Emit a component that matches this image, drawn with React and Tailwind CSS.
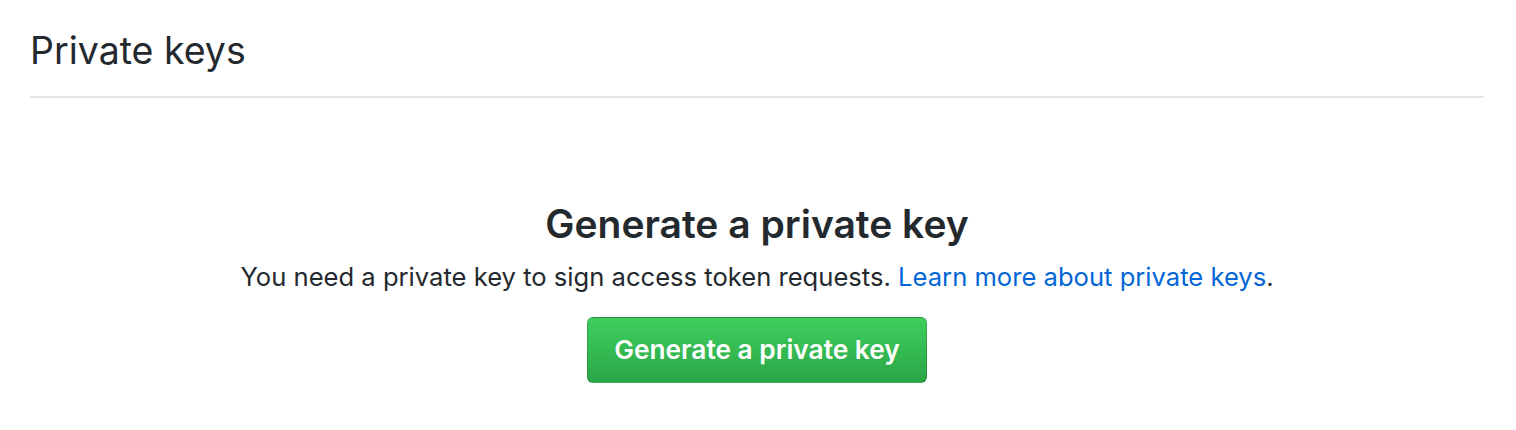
export default function App() {
  return (
    <div
      className="w-[1516px] h-[430px] bg-white text-[#24292e] pl-[30px] pr-[32px] pt-[24px]"
      style={{ fontFamily: 'Inter, "Noto Sans", sans-serif' }}
    >
      {/* Subhead */}
      <div className="border-b-2 border-[#e1e4e8] pb-[18px]">
        <h2 className="text-[37.5px] leading-[54px] font-normal">Private keys</h2>
      </div>

      {/* Blankslate */}
      <div className="flex flex-col items-center pt-[98px]">
        <h3 className="text-[39px] leading-[56px] font-semibold">Generate a private key</h3>
        <p className="text-[25.6px] leading-[38px] mt-[6px]">
          You need a private key to sign access token requests.{' '}
          <a href="#" className="text-[#0366d6]">Learn more about private keys</a>.
        </p>
        <button className="mt-[21px] h-[66px] px-[26px] rounded-[6px] border border-[rgba(27,31,35,0.2)] bg-gradient-to-b from-[#3fcf5e] to-[#2aa647] text-white text-[26.3px] font-semibold">
          Generate a private key
        </button>
      </div>
    </div>
  );
}
